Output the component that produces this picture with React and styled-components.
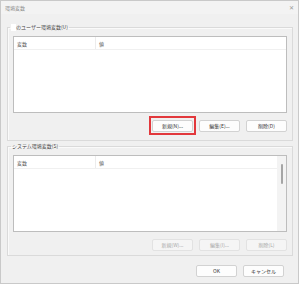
import React from "react";
import styled, { createGlobalStyle } from "styled-components";

const GlobalStyle = createGlobalStyle`
  html, body {
    margin: 0;
    padding: 0;
    background: #ffffff;
  }
  body {
    font-family: "Noto Sans CJK JP", "Noto Sans", sans-serif;
  }
`;

const Window = styled.div`
  position: relative;
  width: 299px;
  height: 284px;
  box-sizing: border-box;
  border: 1px solid #c9c9c9;
  background: #f0f0f0;
  display: flex;
  flex-direction: column;
`;

const TitleBar = styled.div`
  height: 13px;
  display: flex;
  align-items: center;
  justify-content: space-between;
  padding: 0 4px 0 4px;
  background: #f3f3f3;
  color: #8a8a8a;
  font-size: 5px;
`;

const Close = styled.span`
  font-size: 6px;
  color: #9a9a9a;
  line-height: 1;
`;

const Content = styled.div`
  flex: 1;
  display: flex;
  flex-direction: column;
  padding: 9px 5px 0 6px;
`;

const Group = styled.fieldset`
  margin: 0;
  padding: 5px 5px ${({ $padBottom }) => $padBottom}px 5px;
  border: 1px solid #dadada;
  box-shadow: inset 1px 1px 0 #fafafa;
  display: flex;
  flex-direction: column;
  margin-top: ${({ $gap }) => $gap}px;
`;

const Legend = styled.legend`
  font-size: 5px;
  line-height: 8px;
  height: 8px;
  padding: 0 1px;
  margin-left: ${({ $shift }) => $shift}px;
  color: #444;
  display: flex;
  align-items: center;
`;

const Masked = styled.span`
  display: inline-block;
  width: 5px;
  height: 7px;
  background: #ffffff;
`;

const List = styled.div`
  height: 77px;
  box-sizing: border-box;
  border: 1px solid #bdbdbd;
  background: #ffffff;
  display: flex;
`;

const ListBody = styled.div`
  flex: 1;
  display: flex;
  flex-direction: column;
`;

const Header = styled.div`
  height: 13px;
  box-sizing: border-box;
  border-bottom: 1px solid #f0f0f0;
  display: flex;
  align-items: center;
`;

const HeaderCell = styled.div`
  width: ${({ $w }) => ($w ? `${$w}px` : "auto")};
  flex: ${({ $w }) => ($w ? "none" : "1")};
  height: 100%;
  box-sizing: border-box;
  padding-left: 3px;
  display: flex;
  align-items: center;
  font-size: 5px;
  color: #555;
  border-right: ${({ $w }) => ($w ? "1px solid #ececec" : "none")};
`;

const Scrollbar = styled.div`
  width: 9px;
  background: #f3f3f3;
  display: flex;
  justify-content: center;
  padding-top: 8px;
  box-sizing: border-box;
`;

const Thumb = styled.div`
  width: 2px;
  height: 20px;
  border-radius: 1px;
  background: #a5a5a5;
`;

const ButtonRow = styled.div`
  display: flex;
  justify-content: flex-end;
  gap: 6px;
  margin-top: ${({ $top }) => $top}px;
  padding-right: ${({ $right }) => $right || 0}px;
`;

const Button = styled.button`
  position: relative;
  width: 41px;
  height: 12px;
  box-sizing: border-box;
  padding: 0;
  margin: 0;
  border: 1px solid ${({ disabled }) => (disabled ? "#e2e2e2" : "#d2d2d2")};
  border-radius: 2px;
  background: ${({ disabled }) => (disabled ? "#f5f5f5" : "#fdfdfd")};
  color: ${({ disabled }) => (disabled ? "#a8a8a8" : "#333")};
  font-family: "Noto Sans CJK JP", "Noto Sans", sans-serif;
  font-size: 5px;
  line-height: 10px;

  ${({ $highlight }) =>
    $highlight &&
    `
    &::after {
      content: "";
      position: absolute;
      left: -4px;
      top: -5px;
      right: -4px;
      bottom: -4px;
      border: 2px solid #e2383c;
      pointer-events: none;
    }
  `}
`;

const Grip = styled.div`
  position: absolute;
  right: 2px;
  bottom: 2px;
  width: 5px;
  height: 5px;
  background-image: radial-gradient(circle, #b5b5b5 0.6px, transparent 0.7px);
  background-size: 2px 2px;
  clip-path: polygon(100% 0, 100% 100%, 0 100%);
`;

const ListView = ({ scroll }) => (
  <List>
    <ListBody>
      <Header>
        <HeaderCell $w={82}>変数</HeaderCell>
        <HeaderCell>値</HeaderCell>
      </Header>
    </ListBody>
    {scroll && (
      <Scrollbar>
        <Thumb />
      </Scrollbar>
    )}
  </List>
);

export default function App() {
  return (
    <>
      <GlobalStyle />
      <Window>
        <TitleBar>
          <span>環境変数</span>
          <Close>✕</Close>
        </TitleBar>
        <Content>
          <Group $gap={0} $padBottom={8}>
            <Legend $shift={-3}>
              <Masked />
              のユーザー環境変数(U)
            </Legend>
            <ListView />
            <ButtonRow $top={7}>
              <Button $highlight>新規(N)...</Button>
              <Button>編集(E)...</Button>
              <Button>削除(D)</Button>
            </ButtonRow>
          </Group>
          <Group $gap={1} $padBottom={4}>
            <Legend $shift={-2}>システム環境変数(S)</Legend>
            <ListView scroll />
            <ButtonRow $top={7}>
              <Button disabled>新規(W)...</Button>
              <Button disabled>編集(I)...</Button>
              <Button disabled>削除(L)</Button>
            </ButtonRow>
          </Group>
          <ButtonRow $top={9} $right={9}>
            <Button>OK</Button>
            <Button>キャンセル</Button>
          </ButtonRow>
        </Content>
        <Grip />
      </Window>
    </>
  );
}
